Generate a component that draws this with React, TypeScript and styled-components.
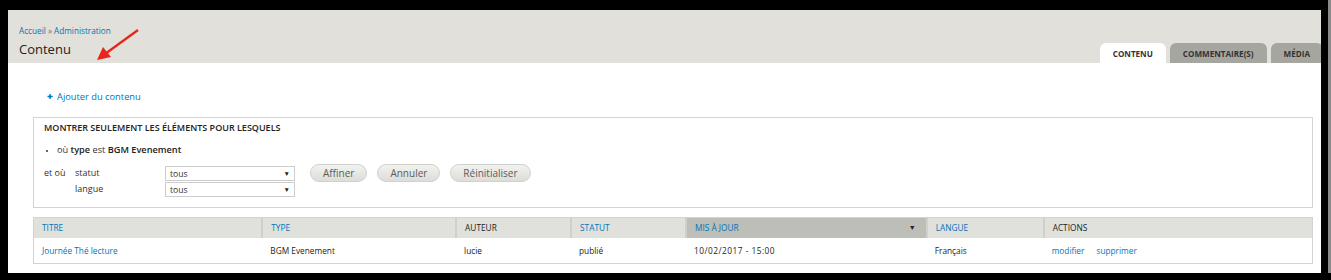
import styled, { createGlobalStyle } from "styled-components";

const GlobalStyle = createGlobalStyle`
  body {
    margin: 0;
    background: #000;
    font-family: "Open Sans", "Liberation Sans", sans-serif;
  }
`;

type Column = { label: string; width: number; link?: boolean; active?: boolean };

const columns: Column[] = [
  { label: "Titre", width: 229, link: true },
  { label: "Type", width: 194, link: true },
  { label: "Auteur", width: 115 },
  { label: "Statut", width: 115, link: true },
  { label: "Mis à jour", width: 241, link: true, active: true },
  { label: "Langue", width: 117, link: true },
  { label: "Actions", width: 269 },
];

const tabs = [
  { label: "Contenu", active: true },
  { label: "Commentaire(s)" },
  { label: "Média" },
];

function App() {
  return (
    <>
      <GlobalStyle />
      <Frame>
        <Page>
          <Header>
            <TitleBlock>
              <Breadcrumb>
                <a>Accueil</a> » <a>Administration</a>
              </Breadcrumb>
              <PageTitle>Contenu</PageTitle>
            </TitleBlock>
            <Tabs>
              {tabs.map((t) => (
                <Tab key={t.label} $active={t.active}>
                  {t.label}
                </Tab>
              ))}
            </Tabs>
            <Arrow width="44" height="34" viewBox="0 0 44 34">
              <line x1="42" y1="2" x2="9" y2="26" stroke="#e8261c" strokeWidth="2.4" />
              <polygon points="1,32 7,19 15,29" fill="#e8261c" />
            </Arrow>
          </Header>

          <Content>
            <AddLink>
              <Plus>✚</Plus>Ajouter du contenu
            </AddLink>

            <Filters>
              <FilterTitle>Montrer seulement les éléments pour lesquels</FilterTitle>
              <Bullets>
                <li>
                  où <b>type</b> est <b>BGM Evenement</b>
                </li>
              </Bullets>
              <FilterRow>
                <Conditions>
                  <Where>et où</Where>
                  <Field>
                    <Label>statut</Label>
                    <Select>
                      <span>tous</span>
                      <Caret>▼</Caret>
                    </Select>
                  </Field>
                  <Field>
                    <Label>langue</Label>
                    <Select>
                      <span>tous</span>
                      <Caret>▼</Caret>
                    </Select>
                  </Field>
                </Conditions>
                <Buttons>
                  <Button>Affiner</Button>
                  <Button>Annuler</Button>
                  <Button>Réinitialiser</Button>
                </Buttons>
              </FilterRow>
            </Filters>

            <Table>
              <thead>
                <tr>
                  {columns.map((c) => (
                    <Th key={c.label} $active={c.active} $link={c.link} style={{ width: c.width }}>
                      <ThInner>
                        {c.label}
                        {c.active && <SortIcon>▼</SortIcon>}
                      </ThInner>
                    </Th>
                  ))}
                </tr>
              </thead>
              <tbody>
                <tr>
                  <Td>
                    <Link>Journée Thé lecture</Link>
                  </Td>
                  <Td>BGM Evenement</Td>
                  <Td>lucie</Td>
                  <Td>publié</Td>
                  <Td>
                    <Date>10/02/2017 - 15:00</Date>
                  </Td>
                  <Td>Français</Td>
                  <Td>
                    <Link>modifier</Link>
                    <Link $gap>supprimer</Link>
                  </Td>
                </tr>
              </tbody>
            </Table>
          </Content>
        </Page>
        <Strip />
      </Frame>
    </>
  );
}

const Frame = styled.div`
  display: flex;
  align-items: flex-start;
  height: 280px;
  background: #000;
`;

const Page = styled.div`
  margin: 10px 0 0 8px;
  width: 1313px;
  height: 263px;
  background: #fff;
  overflow: hidden;
  color: #333;
`;

const Strip = styled.div`
  margin-left: 7px;
  width: 3px;
  height: 273px;
  background: #8a8a8a;
`;

const Header = styled.header`
  position: relative;
  height: 53px;
  background: #e1e0da;
  display: flex;
  justify-content: space-between;
  align-items: flex-end;
  padding-left: 11px;
`;

const TitleBlock = styled.div`
  align-self: flex-start;
  padding-top: 15px;
`;

const Breadcrumb = styled.div`
  font-size: 8.2px;
  color: #777;
  a {
    color: #0074bd;
  }
`;

const PageTitle = styled.h1`
  margin: 4px 0 0;
  font-size: 13px;
  font-weight: 400;
  color: #222;
`;

const Tabs = styled.ul`
  display: flex;
  align-items: flex-end;
  gap: 4px;
  margin: 0 -2px 0 0;
  padding: 0;
  list-style: none;
`;

const Tab = styled.li<{ $active?: boolean }>`
  height: 20px;
  line-height: 21px;
  padding: 0 13px;
  border-radius: 6px 6px 0 0;
  background: ${(p) => (p.$active ? "#fff" : "#a6a6a1")};
  color: #333;
  font-size: 8.1px;
  font-weight: 700;
  text-transform: uppercase;
`;

const Arrow = styled.svg`
  position: absolute;
  left: 88px;
  top: 18px;
`;

const Content = styled.main`
  padding: 0 8px 0 25px;
`;

const AddLink = styled.a`
  display: flex;
  align-items: center;
  margin: 28px 0 0 14px;
  height: 11px;
  font-size: 9.3px;
  color: #0074bd;
`;

const Plus = styled.span`
  font-size: 7px;
  margin-right: 4px;
`;

const Filters = styled.fieldset`
  margin: 15px 0 0;
  padding: 3px 10px 0;
  height: 91px;
  box-sizing: border-box;
  border: 1px solid #d3d3d0;
`;

const FilterTitle = styled.div`
  font-size: 9px;
  font-weight: 600;
  text-transform: uppercase;
  color: #222;
`;

const Bullets = styled.ul`
  margin: 9px 0 0;
  padding-left: 13px;
  font-size: 9.2px;
  li {
    list-style: disc;
  }
  li::marker {
    font-size: 7px;
  }
  b {
    font-weight: 600;
    color: #222;
  }
`;

const FilterRow = styled.div`
  display: flex;
  align-items: flex-start;
  margin-top: 8px;
`;

const Conditions = styled.div`
  display: grid;
  grid-template-columns: 31px 90px 130px;
  row-gap: 1px;
  margin-top: 2px;
  font-size: 9px;
`;

const Where = styled.span`
  grid-row: 1;
  line-height: 14px;
`;

const Field = styled.div`
  grid-column: 2 / 4;
  display: grid;
  grid-template-columns: 90px 130px;
`;

const Label = styled.span`
  line-height: 14px;
`;

const Select = styled.div`
  display: flex;
  justify-content: space-between;
  align-items: center;
  height: 15px;
  box-sizing: border-box;
  padding: 0 4px;
  border: 1px solid #ccc;
  font-size: 8.6px;
  color: #333;
`;

const Caret = styled.span`
  font-size: 6.5px;
  color: #222;
`;

const Buttons = styled.div`
  display: flex;
  gap: 10px;
  margin-left: 15px;
`;

const Button = styled.button`
  height: 18px;
  padding: 0 12px;
  border: 1px solid #d0d0cc;
  border-radius: 10px;
  background: linear-gradient(#f2f2f0, #dcdcd8);
  font-family: inherit;
  font-size: 10px;
  color: #5c5c5c;
`;

const Table = styled.table`
  width: 100%;
  margin-top: 9px;
  border-collapse: collapse;
  border: 1px solid #d3d3d0;
  font-size: 8.3px;
`;

const Th = styled.th<{ $active?: boolean; $link?: boolean }>`
  height: 20px;
  padding: 0 8px;
  box-sizing: border-box;
  text-align: left;
  font-weight: 400;
  text-transform: uppercase;
  background: ${(p) => (p.$active ? "#bebeb9" : "#e1e1dc")};
  color: ${(p) => (p.$link ? "#0074bd" : "#222")};
  border-left: 2px solid #cfcfcb;
  &:first-child {
    border-left: none;
  }
`;

const ThInner = styled.div`
  display: flex;
  justify-content: space-between;
  align-items: center;
`;

const SortIcon = styled.span`
  font-size: 7px;
  color: #222;
  margin-right: 2px;
`;

const Td = styled.td`
  height: 25px;
  padding: 0 8px;
  color: #222;
`;

const Date = styled.span`
  letter-spacing: 0.5px;
`;

const Link = styled.a<{ $gap?: boolean }>`
  color: #0074bd;
  margin-left: ${(p) => (p.$gap ? "12px" : "0")};
`;

export default App;
